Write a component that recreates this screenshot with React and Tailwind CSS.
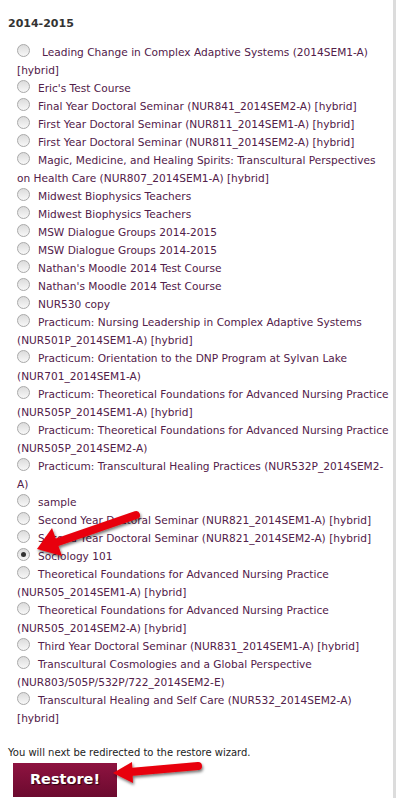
const courses = [
  { lines: ['Leading Change in Complex Adaptive Systems (2014SEM1-A)', '[hybrid]'], pad: true },
  { lines: ["Eric's Test Course"] },
  { lines: ['Final Year Doctoral Seminar (NUR841_2014SEM2-A) [hybrid]'] },
  { lines: ['First Year Doctoral Seminar (NUR811_2014SEM1-A) [hybrid]'] },
  { lines: ['First Year Doctoral Seminar (NUR811_2014SEM2-A) [hybrid]'] },
  { lines: ['Magic, Medicine, and Healing Spirits: Transcultural Perspectives', 'on Health Care (NUR807_2014SEM1-A) [hybrid]'] },
  { lines: ['Midwest Biophysics Teachers'] },
  { lines: ['Midwest Biophysics Teachers'] },
  { lines: ['MSW Dialogue Groups 2014-2015'] },
  { lines: ['MSW Dialogue Groups 2014-2015'] },
  { lines: ["Nathan's Moodle 2014 Test Course"] },
  { lines: ["Nathan's Moodle 2014 Test Course"] },
  { lines: ['NUR530 copy'] },
  { lines: ['Practicum: Nursing Leadership in Complex Adaptive Systems', '(NUR501P_2014SEM1-A) [hybrid]'] },
  { lines: ['Practicum: Orientation to the DNP Program at Sylvan Lake', '(NUR701_2014SEM1-A)'] },
  { lines: ['Practicum: Theoretical Foundations for Advanced Nursing Practice', '(NUR505P_2014SEM1-A) [hybrid]'] },
  { lines: ['Practicum: Theoretical Foundations for Advanced Nursing Practice', '(NUR505P_2014SEM2-A)'] },
  { lines: ['Practicum: Transcultural Healing Practices (NUR532P_2014SEM2-', 'A)'] },
  { lines: ['sample'] },
  { lines: ['Second Year Doctoral Seminar (NUR821_2014SEM1-A) [hybrid]'] },
  { lines: ['Second Year Doctoral Seminar (NUR821_2014SEM2-A) [hybrid]'] },
  { lines: ['Sociology 101'], checked: true },
  { lines: ['Theoretical Foundations for Advanced Nursing Practice', '(NUR505_2014SEM1-A) [hybrid]'] },
  { lines: ['Theoretical Foundations for Advanced Nursing Practice', '(NUR505_2014SEM2-A) [hybrid]'] },
  { lines: ['Third Year Doctoral Seminar (NUR831_2014SEM1-A) [hybrid]'] },
  { lines: ['Transcultural Cosmologies and a Global Perspective', '(NUR803/505P/532P/722_2014SEM2-E)'] },
  { lines: ['Transcultural Healing and Self Care (NUR532_2014SEM2-A)', '[hybrid]'] },
];

function Radio({ checked }) {
  return (
    <span className="relative -top-[3px] inline-block w-[13px] h-[13px] mr-2 align-middle rounded-full border border-[#a9a9a9] bg-gradient-to-b from-[#dcdcdc] to-[#f7f7f7]">
      {checked && (
        <span className="absolute left-[3px] top-[3px] w-[5px] h-[5px] rounded-full bg-[#333]" />
      )}
    </span>
  );
}

export default function App() {
  return (
    <div className="relative min-h-screen bg-white flex font-['DejaVu_Sans',Verdana,sans-serif]">
      <div className="flex-1 pl-2 pt-[15px]">
        <h3 className="text-[11px] font-bold text-[#333] leading-[18px]">2014-2015</h3>
        <div className="mt-[10px] pl-[9px]">
          {courses.map((c, i) => (
            <div key={i} className="text-[10.6px] leading-[18px] text-[#522049]">
              {c.lines.map((l, j) => (
                <div key={j} className="whitespace-nowrap">
                  {j === 0 && <Radio checked={c.checked} />}
                  {j === 0 && c.pad && <span className="inline-block w-1" />}
                  {l}
                </div>
              ))}
            </div>
          ))}
        </div>
        <p className="mt-[19px] text-[10px] leading-[14px] text-[#222]">
          You will next be redirected to the restore wizard.
        </p>
        <button className="mt-[3px] ml-[5px] w-[104px] h-[34px] bg-gradient-to-b from-[#8e1340] to-[#6c0a2f] text-white font-bold text-[14.5px] [text-shadow:1px_1px_1px_#2a0010]">
          Restore!
        </button>
      </div>
      <div className="w-[3px] bg-[#dcdcdc]" />

      <svg className="absolute left-[28px] top-[500px]" width="120" height="70" viewBox="0 0 120 70">
        <defs>
          <filter id="s1" x="-20%" y="-20%" width="140%" height="160%">
            <feDropShadow dx="1" dy="2" stdDeviation="1.5" floodColor="#000" floodOpacity="0.55" />
          </filter>
        </defs>
        <g filter="url(#s1)">
          <path d="M108 15 L24 44" stroke="#e8000a" strokeWidth="8" strokeLinecap="round" fill="none" />
          <polygon points="9,49 24,28 34,56" fill="#e8000a" />
        </g>
      </svg>
      <svg className="absolute left-[108px] top-[752px]" width="100" height="40" viewBox="0 0 100 40">
        <defs>
          <filter id="s2" x="-20%" y="-30%" width="140%" height="180%">
            <feDropShadow dx="1" dy="2" stdDeviation="1.5" floodColor="#000" floodOpacity="0.55" />
          </filter>
        </defs>
        <g filter="url(#s2)">
          <path d="M90 14 L22 20" stroke="#e8000a" strokeWidth="8" strokeLinecap="round" fill="none" />
          <polygon points="5,21 24,10 25,31" fill="#e8000a" />
        </g>
      </svg>
    </div>
  );
}
